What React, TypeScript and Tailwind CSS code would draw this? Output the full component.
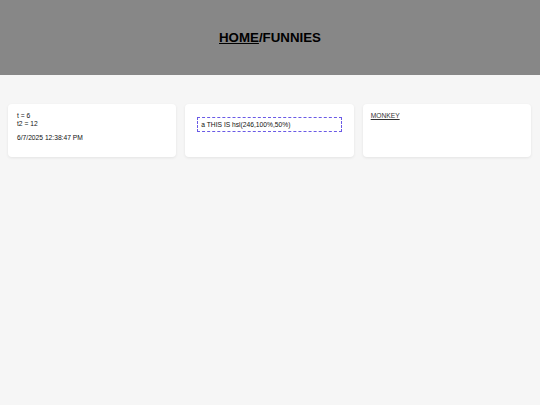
import { useEffect, useState } from "react"

// funnies page: grey banner + three little cards
export default function App() {
	const [t] = useState(6)
	const stamp = "6/7/2025 12:38:47 PM"

	useEffect(() => {
		document.body.style.background = "#f6f6f6"
	}, [])

	return (
		<div className="min-h-[405px] bg-[#f6f6f6] font-['Liberation_Sans',Arial,sans-serif] text-[#111]">
			<header className="flex h-[74.5px] items-center justify-center bg-[#878787]">
				<h1 className="text-[13.3px] font-bold leading-none text-black">
					<a className="underline">HOME</a>/FUNNIES
				</h1>
			</header>
			<main className="mt-[29.5px] grid grid-cols-3 gap-[9px] pl-[8px] pr-[9px] text-[6.7px] leading-[8px]">
				<section className="h-[53px] rounded-[4px] bg-white px-[9px] pt-[8px] shadow-[0_1px_3px_rgba(0,0,0,0.08)]">
					<div>t = {t}</div>
					<div>t2 = {t * 2}</div>
					<p className="mt-[6px]">{stamp}</p>
				</section>
				<section className="h-[53px] rounded-[4px] bg-white px-[12px] pt-[13px] shadow-[0_1px_3px_rgba(0,0,0,0.08)]">
					<div className="px-[4px] py-[3.5px] outline-1 outline-dashed outline-offset-[-1px] outline-[#6a5ae6]">
						a THIS IS hsl(246,100%,50%)
					</div>
				</section>
				<section className="h-[53px] rounded-[4px] bg-white px-[8px] pt-[8px] shadow-[0_1px_3px_rgba(0,0,0,0.08)]">
					<a className="text-[#333] underline">MONKEY</a>
				</section>
			</main>
		</div>
	)
}
